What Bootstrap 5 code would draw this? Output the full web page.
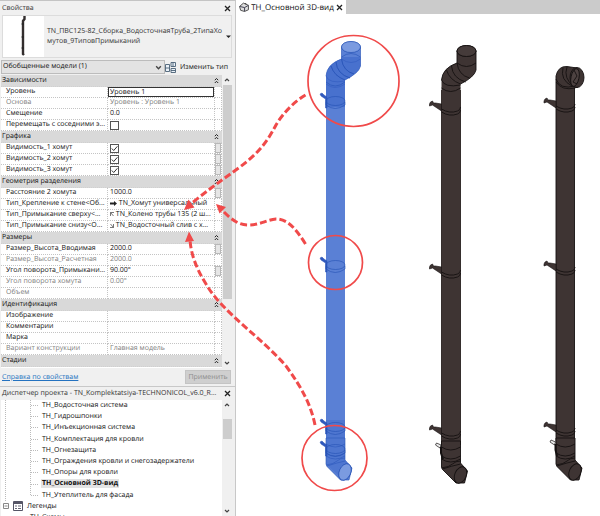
<!DOCTYPE html>
<html lang="ru">
<head>
<meta charset="utf-8">
<meta name="viewport" content="width=device-width, initial-scale=1">
<title>ТН_Основной 3D-вид</title>
<link href="https://cdn.jsdelivr.net/npm/bootstrap@5.3.0/dist/css/bootstrap.min.css" rel="stylesheet">
<style>
  body { font: 7px/11px "Open Sans", "Noto Sans", sans-serif; color: #111; background: #fff; text-rendering: geometricPrecision; }
  button, input, select { font: inherit; color: inherit; text-rendering: inherit; }
  .side { width: 236px; background: #f0f0f0; border-top: 1px solid #c4c4c4; border-right: 1px solid #c8c8c8; }
  .pane-title { height: 14px; padding: 0 4px 0 2px; color: #333; white-space: nowrap; }
  .browser-title { height: 14px; border-top: 1px solid #c8c8c8; }
  .plain-btn { border: 0; background: none; padding: 0; line-height: 11px; white-space: nowrap; }
  .type-box { height: 43px; margin: 0 3px 0 2px; border: 1px solid #dcdcdc; }
  .thumb-pic { width: 41px; height: 41px; background: #fff; }
  .type-btn { padding: 0 0 0 3px; line-height: 10px; color: #333; }
  .filter-row { height: 17px; padding: 2px 7px 1px 1px; }
  .filter-select { width: 164px; height: 14px; border: 1px solid #bcbcbc; background: #e3e3e3; appearance: none; padding: 0 1px; line-height: 12px; border-radius: 0; }
  .chev { margin-left: -10px; pointer-events: none; }
  .props { height: 293px; }
  .props-view { background: #fff; margin-left: 1px; }
  .props table { table-layout: fixed; width: 100%; border-collapse: separate; border-spacing: 0; }
  .props td, .props th { height: 11px; padding: 0 0 0 2px; line-height: 10px; font-weight: 400; white-space: nowrap; overflow: hidden; border-bottom: 1px dotted #c4c4c4; border-right: 1px dotted #c4c4c4; }
  .props tbody th { padding-left: 5px; }
  .props td:last-child { padding: 0; }
  .props tbody .grp th { height: 12px; line-height: 11px; padding: 0 3px 0 1px; background: #d9d9d9; border-right: 0; border-bottom-color: #d0d0d0; }
  .props .muted-row { color: #808080; }
  .level-in { display: block; width: 106px; height: 10px; margin-left: -2px; padding: 0 1px; border: 1px solid #333; border-radius: 0; line-height: 8px; }
  .tick { appearance: none; display: block; width: 9px; height: 9px; margin: 0; border: 1px solid #555; background: #fff; }
  .tick:checked { background: #fff url("data:image/svg+xml,%3Csvg xmlns='http://www.w3.org/2000/svg' viewBox='0 0 7 7'%3E%3Cpath d='M.8 3.5 2.7 5.5 6.4 1.3' fill='none' stroke='%23333'/%3E%3C/svg%3E"); }
  .cell-btn { display: block; width: 6px; height: 10px; border: 1px solid #b8b8b8; background: #e6e6e6; padding: 0; }
  .sbar { width: 13px; padding-right: 3px; background: #f0f0f0; }
  .sbar-end { height: 10px; }
  .sbar-thumb { width: 9px; background: #cdcdcd; }
  .tall { height: 214px; }
  .short { height: 20px; margin-top: 9px; }
  .pane-foot { height: 18px; padding: 0 4px 0 2px; }
  .pane-foot a { color: #2472c0; }
  .apply { width: 46px; height: 14px; border: 1px solid #c4c4c4; background: #cfcfcf; color: #8c8c8c; padding: 0; line-height: 11px; }
  .tree { margin-left: 1px; background: #fff; }
  .tree-lines { left: 0; top: 0; }
  .tree li { line-height: 11px; padding-left: 41px; white-space: nowrap; min-height: 0; }
  .tree li.root { padding-left: 2px; }
  .tree li.cut { flex: 0 0 4px; padding-left: 29px; overflow: hidden; }
  .picked { background: #e3e3e3; font-weight: 700; padding: 0 1px; margin-left: -1px; }
  .tabs { height: 14px; background: #cbcbcb; }
  .tab-item { width: 110px; background: #fff; padding: 0 3px; }
  .tab-item span { font-size: 8px; }
  .notes { left: 0; top: 0; pointer-events: none; }
</style>
<script src="https://cdn.jsdelivr.net/npm/bootstrap@5.3.0/dist/js/bootstrap.bundle.min.js"></script>
</head>
<body class="vh-100 d-flex overflow-hidden position-relative">

<svg class="d-none">
  <symbol id="x" viewBox="0 0 7 7"><path d="M1 1 6 6M6 1 1 6" stroke="#222" stroke-width="1.3" fill="none"/></symbol>
  <symbol id="up" viewBox="0 0 6 6"><path d="M1 4 3 2 5 4" stroke="#444" stroke-width="1.2" fill="none"/></symbol>
  <symbol id="down" viewBox="0 0 6 6"><path d="M1 2 3 4 5 2" stroke="#444" stroke-width="1.2" fill="none"/></symbol>
  <symbol id="fold" viewBox="0 0 5 7"><path d="M.8 3.2 2.5 1.5 4.2 3.2M.8 6 2.5 4.3 4.2 6" stroke="#222" fill="none"/></symbol>
</svg>

<aside class="side d-flex flex-column flex-shrink-0">
  <div class="pane-title d-flex align-items-center justify-content-between">
    <span>Свойства</span>
    <button class="plain-btn d-flex" aria-label="Закрыть свойства"><svg width="7" height="7"><use href="#x"/></svg></button>
  </div>
  <div class="type-box d-flex">
    <div class="thumb-pic flex-shrink-0">
      <svg width="41" height="41" viewBox="0 0 41 41"><path d="M21.500 0V3L20 5V38L21 39" fill="none" stroke="#332e2e" stroke-width="2.400"/><path d="M18.500 8H21M18.500 21H21M18.500 32H21" stroke="#222"/></svg>
    </div>
    <button class="plain-btn type-btn d-flex flex-fill align-items-center justify-content-between text-start">
      <span>TN_ПВС125-82_Сборка_ВодосточнаяТруба_2ТипаХо<br>мутов_9ТиповПримыканий</span>
      <svg width="5" height="4" viewBox="0 0 5 4"><path d="M0 .5H5L2.500 3Z" fill="#222"/></svg>
    </button>
  </div>
  <div class="filter-row d-flex align-items-center">
    <select class="filter-select flex-shrink-0" aria-label="Категория"><option>Обобщенные модели (1)</option></select>
    <svg class="chev flex-shrink-0" width="7" height="7"><use href="#down"/></svg>
    <button class="plain-btn d-flex align-items-center ms-auto gap-1">
      <svg width="11" height="11" viewBox="0 0 11 11"><path d="M.5 2.500H4.500V9.500H.5ZM.5 6H4.500M6 .5H10.500V4.500H6ZM6 6.500H10.500V10.500H6ZM8 .5V4.500M6 8.500H10.500" fill="#eaf1f8" stroke="#4a6075" stroke-width=".9"/></svg>
      <span>Изменить тип</span>
    </button>
  </div>

  <div class="props d-flex">
    <div class="props-view flex-fill overflow-hidden">
      <table>
        <colgroup><col style="width:107px"><col style="width:107px"><col></colgroup>
        <tbody>
          <tr class="grp"><th colspan="3" scope="rowgroup"><div class="d-flex justify-content-between align-items-center">Зависимости<svg width="5" height="7"><use href="#fold"/></svg></div></th></tr>
          <tr><th scope="row"><label for="lvl" class="d-block">Уровень</label></th><td><input id="lvl" class="level-in" value="Уровень 1"></td><td></td></tr>
          <tr class="muted-row"><th scope="row">Основа</th><td>Уровень : Уровень 1</td><td></td></tr>
          <tr><th scope="row">Смещение</th><td>0.0</td><td></td></tr>
          <tr><th scope="row"><label for="mv" class="d-block">Перемещать с соседними э...</label></th><td><input id="mv" type="checkbox" class="tick"></td><td></td></tr>
          <tr class="grp"><th colspan="3" scope="rowgroup"><div class="d-flex justify-content-between align-items-center">Графика<svg width="5" height="7"><use href="#fold"/></svg></div></th></tr>
          <tr><th scope="row"><label for="v1" class="d-block">Видимость_1 хомут</label></th><td><input id="v1" type="checkbox" class="tick" checked></td><td><button class="cell-btn" aria-label="Связать"></button></td></tr>
          <tr><th scope="row"><label for="v2" class="d-block">Видимость_2 хомут</label></th><td><input id="v2" type="checkbox" class="tick" checked></td><td><button class="cell-btn" aria-label="Связать"></button></td></tr>
          <tr><th scope="row"><label for="v3" class="d-block">Видимость_3 хомут</label></th><td><input id="v3" type="checkbox" class="tick" checked></td><td><button class="cell-btn" aria-label="Связать"></button></td></tr>
          <tr class="grp"><th colspan="3" scope="rowgroup"><div class="d-flex justify-content-between align-items-center">Геометрия разделения<svg width="5" height="7"><use href="#fold"/></svg></div></th></tr>
          <tr><th scope="row">Расстояние 2 хомута</th><td>1000.0</td><td><button class="cell-btn" aria-label="Связать"></button></td></tr>
          <tr><th scope="row">Тип_Крепление к стене&lt;Об...</th><td><svg width="7" height="5" viewBox="0 0 7 5"><path d="M0 1.500H4V0L7 2.500 4 5V3.500H0Z" fill="#222"/></svg> TN_Хомут универсальный</td><td></td></tr>
          <tr><th scope="row">Тип_Примыкание сверху&lt;...</th><td><svg width="4" height="5" viewBox="0 0 4 5"><path d="M.5 4V.5H4M.5.5 3.500 4" fill="none" stroke="#555" stroke-width=".8"/></svg> TN_Колено трубы 135 (2 ш...</td><td></td></tr>
          <tr><th scope="row">Тип_Примыкание снизу&lt;О...</th><td><svg width="4" height="5" viewBox="0 0 4 5"><path d="M0 4.500H3.500V1M.5 1 3.500 4.500" fill="none" stroke="#555" stroke-width=".8"/></svg> TN_Водосточный слив с х...</td><td></td></tr>
          <tr class="grp"><th colspan="3" scope="rowgroup"><div class="d-flex justify-content-between align-items-center">Размеры<svg width="5" height="7"><use href="#fold"/></svg></div></th></tr>
          <tr><th scope="row">Размер_Высота_Вводимая</th><td>2000.0</td><td><button class="cell-btn" aria-label="Связать"></button></td></tr>
          <tr class="muted-row"><th scope="row">Размер_Высота_Расчетная</th><td>2000.0</td><td></td></tr>
          <tr><th scope="row">Угол поворота_Примыкани...</th><td>90.00°</td><td><button class="cell-btn" aria-label="Связать"></button></td></tr>
          <tr class="muted-row"><th scope="row">Угол поворота хомута</th><td>0.00°</td><td></td></tr>
          <tr class="muted-row"><th scope="row">Объем</th><td></td><td></td></tr>
          <tr class="grp"><th colspan="3" scope="rowgroup"><div class="d-flex justify-content-between align-items-center">Идентификация<svg width="5" height="7"><use href="#fold"/></svg></div></th></tr>
          <tr><th scope="row">Изображение</th><td></td><td></td></tr>
          <tr><th scope="row">Комментарии</th><td></td><td></td></tr>
          <tr><th scope="row">Марка</th><td></td><td></td></tr>
          <tr class="muted-row"><th scope="row">Вариант конструкции</th><td>Главная модель</td><td></td></tr>
          <tr class="grp"><th colspan="3" scope="rowgroup"><div class="d-flex justify-content-between align-items-center">Стадии<svg width="5" height="7"><use href="#fold"/></svg></div></th></tr>
        </tbody>
      </table>
    </div>
    <div class="sbar d-flex flex-column align-items-center flex-shrink-0">
      <svg class="sbar-end" width="6"><use href="#up"/></svg>
      <div class="sbar-thumb tall"></div>
      <svg class="sbar-end mt-auto" width="6"><use href="#down"/></svg>
    </div>
  </div>
  <div class="pane-foot d-flex align-items-center justify-content-between">
    <a href="#help">Справка по свойствам</a>
    <button class="apply" disabled>Применить</button>
  </div>

  <div class="pane-title browser-title d-flex align-items-center justify-content-between">
    <span>Диспетчер проекта - TN_Komplektatsiya-TECHNONICOL_v6.0_R...</span>
    <button class="plain-btn d-flex" aria-label="Закрыть диспетчер"><svg width="7" height="7"><use href="#x"/></svg></button>
  </div>
  <div class="d-flex flex-fill overflow-hidden">
    <div class="tree flex-fill position-relative d-flex">
      <svg class="tree-lines position-absolute" width="40" height="116"><path d="M4.500 0V102M29.500 0V95.500M30 5.500H38M30 16.500H38M30 27.500H38M30 39.500H38M30 50.500H38M30 61.500H38M30 72.500H38M30 84.500H38M30 95.500H38" stroke="#bbb" stroke-dasharray="1 1" fill="none"/></svg>
      <ul class="list-unstyled mb-0 d-flex flex-column flex-fill">
        <li class="flex-fill">ТН_Водосточная система</li>
        <li class="flex-fill">ТН_Гидрошпонки</li>
        <li class="flex-fill">ТН_Инъекционная система</li>
        <li class="flex-fill">ТН_Комплектация для кровли</li>
        <li class="flex-fill">ТН_Огнезащита</li>
        <li class="flex-fill">ТН_Ограждения кровли и снегозадержатели</li>
        <li class="flex-fill">ТН_Опоры для кровли</li>
        <li class="flex-fill"><span class="picked">ТН_Основной 3D-вид</span></li>
        <li class="flex-fill">ТН_Утеплитель для фасада</li>
        <li class="root flex-fill d-flex align-items-center gap-1"><svg width="6" height="6"><path d="M.5.5H5.500V5.500H.5ZM1.500 3H4.500" fill="#fff" stroke="#888"/></svg><svg width="10" height="10"><path d="M.5.5H9.500V9.500H.5Z" fill="#fff" stroke="#556"/><path d="M1 2H9" stroke="#556" stroke-width="2"/><path d="M2 5H4M5 5H8M2 7.500H4M5 7.500H8" stroke="#667"/></svg><span>Легенды</span></li>
        <li class="cut">ТН_Схемы</li>
      </ul>
    </div>
    <div class="sbar d-flex flex-column align-items-center flex-shrink-0">
      <svg class="sbar-end" width="6"><use href="#up"/></svg>
      <div class="sbar-thumb short"></div>
      <svg class="sbar-end mt-auto" width="6"><use href="#down"/></svg>
    </div>
  </div>
</aside>

<main class="flex-fill d-flex flex-column">
  <div class="tabs d-flex">
    <div class="tab-item d-flex align-items-center justify-content-between">
      <svg width="10" height="10" viewBox="0 0 9 9"><path d="M.5 4 4 1 8.500 3V7L5 8.500 1.500 7.500Z" fill="#ddd" stroke="#555" stroke-width=".9"/><path d="M.5 4 5 5 8.500 3M5 5V8.500" fill="none" stroke="#445" stroke-width=".9"/><path d="M6 1V2" stroke="#444"/></svg>
      <span>ТН_Основной 3D-вид</span>
      <button class="plain-btn d-flex" aria-label="Закрыть вид"><svg width="7" height="7"><use href="#x"/></svg></button>
    </div>
  </div>
</main>

<svg class="notes position-absolute" width="600" height="516" viewBox="0 0 600 516">
  <defs>
    <g id="foot">
      <path d="M0 0V26L1 28.500 14.500 42H23L26 30 19 22V0Z"/>
      <path fill="none" d="M0 27Q8 26 11 23T19 20M1 28Q10 25 19 23M0 6Q9 12 19 6M0 15Q9 21 19 15M0 18Q9 24 19 18"/>
      <ellipse cx="19" cy="34" rx="5.700" ry="8.600" transform="rotate(24 19 34)"/>
    </g>
    <g id="offset">
      <path d="M15.500 5V17Q1 22 0 34V60H19V38Q33 31 34.500 24V5Z" stroke="none"/>
      <path fill="none" d="M15.500 5V17Q1 22 0 34M34.500 5V24Q33 31 19 38"/>
      <path fill="none" d="M15.500 17Q25 24 34.500 17M15.500 17Q17 29 28 32M10 20Q11 32 24 36M5 24Q8 34 19 38M0 34Q3 42 19 39M0 42Q9 49 19 42"/>
      <ellipse cx="25" cy="5" rx="9.500" ry="5.500"/>
    </g>
    <g id="clamp">
      <path stroke-width=".6" d="M-12 -5 -11 -7 -9 -8 -8 -6 -6 -6 0 -5V2L-9 -4 -12 -3Z"/>
      <path fill="none" d="M0 0Q8 5 16 2 19 1 19 -2M0 3Q8 8 16 5 19 4 19 1"/>
    </g>
    <g id="band">
      <path stroke-width=".5" d="M-6 -7 -4 -8 -2 -6 1 -4V7H-.500V-2L-5 -5Z"/>
      <ellipse cx="9.500" cy="0" rx="9.500" ry="4.500" fill="none"/>
      <path fill="none" d="M0 1V4Q9 11 19 4V1"/>
    </g>
  </defs>

  <g fill="#5a80d5" stroke="#2450b4" stroke-width=".6">
    <path d="M326 85H345V441H326Z" stroke="none"/>
    <use href="#offset" x="326" y="42"/><use href="#foot" x="326" y="438"/>
    <g fill="#3a64c8" fill-opacity=".55" stroke="none">
      <path d="M326 76Q327 64 341.500 59V57H360.500V66Q359 73 345 80V107H326Z"/>
      <path d="M326 420H345V460L351 467 340 477 326 464Z" fill-opacity=".35"/></g>
    <g fill="#3059bd"><use href="#band" x="326" y="101"/><use href="#band" x="326" y="265"/><use href="#band" x="326" y="427"/><use href="#band" x="326" y="449"/></g>
    <path fill="none" d="M341.500 59Q343 71 354 74M336 62Q337 74 350 78M331 66Q334 76 345 80M326 82Q335 90 345 82M341.500 57Q351 50 360.500 57"/>
    <ellipse cx="351" cy="47" rx="9.500" ry="5.500" fill="#7b9be0"/>
    <ellipse cx="345" cy="472" rx="5.700" ry="8.600" transform="rotate(24 345 472)" fill="#7b9be0"/>
  </g>

  <g fill="#3e3433" stroke="#151111" stroke-width=".9">
    <path d="M441.500 90V445M460.500 90V445"/>
    <path d="M441.500 90H460.500V445H441.500Z" stroke="none"/>
    <use href="#offset" x="441.500" y="46"/>
    <use href="#foot" x="441.500" y="441"/>
    <use href="#clamp" x="441.500" y="109"/><use href="#clamp" x="441.500" y="272"/><use href="#clamp" x="441.500" y="433"/>
    <ellipse cx="466.500" cy="51" rx="9.500" ry="5.500" fill="#453b3a"/>
    <path d="M440 448 435.500 445 436.500 443 441 445Z" fill="#eee" stroke-width=".7"/><path d="M441 447V453L443 459" fill="none" stroke-width="2"/>
  </g>

  <g fill="#3e3433" stroke="#151111" stroke-width=".9">
    <path d="M556 84V76Q558 66 567 66.500L577 68 578 87 574.500 88V442H556Z"/>
    <path d="M556 79Q560 90 575 86M556 82Q562 91 575 88M563 68Q560 80 572 86M567 67Q563 78 574 87" fill="none"/>
    <ellipse cx="577" cy="77.500" rx="7" ry="10"/><ellipse cx="575" cy="77.500" rx="4" ry="9" transform="rotate(12 575 77.500)" fill="#4d4241"/>
    <path d="M574 70 577 76 573 82 577 84" fill="none"/>
    <use href="#foot" x="556" y="438"/>
    <use href="#clamp" x="556" y="106"/><use href="#clamp" x="556" y="269"/><use href="#clamp" x="556" y="430"/>
    <path d="M554.500 445 550 442 551 440 555.500 442Z" fill="#eee" stroke-width=".7"/><path d="M555.500 444V450L557 456" fill="none" stroke-width="2"/>
  </g>

  <g fill="none" stroke="#f04a4a" stroke-width="1.700">
    <circle cx="353.500" cy="81" r="45.500"/>
    <circle cx="335.500" cy="262.500" r="27"/>
    <circle cx="334.500" cy="458" r="32.500"/>
  </g>
  <g fill="none" stroke="#f04a4a" stroke-width="3" stroke-dasharray="7 3">
    <path d="M305.500 95C295 101 283 113 276 125C266 144 258 153 240 167C222 180 208 190 192 203"/>
    <path d="M305.500 244C296 229 288 219 276 219C266 220 260 225 248 225C236 225 228 216 221 209"/>
    <path d="M315 425C311 405 302 388 286 366C262 338 222 312 206 284C196 268 191 254 190 240"/>
  </g>
  <path d="M184 210 188.500 199.500 194.500 207.500ZM216 204 226 207 219.500 213.500ZM189 231.500 194 241 185 242Z" fill="#f04a4a"/>
</svg>
</body>
</html>
